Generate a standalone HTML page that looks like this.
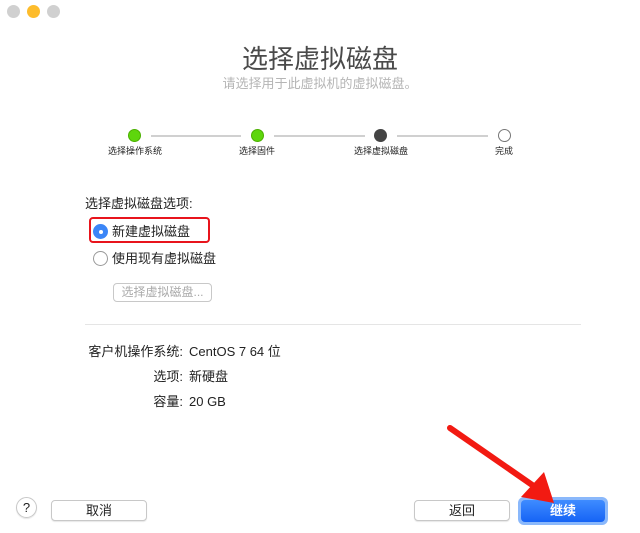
<!DOCTYPE html>
<html><head><meta charset="utf-8"><style>
*{margin:0;padding:0;box-sizing:border-box}
body{width:640px;height:533px;background:#fff;font-family:"Liberation Sans","Noto Sans CJK SC",sans-serif;position:relative;overflow:hidden;color:#222}
.a{position:absolute;white-space:nowrap;line-height:1.2}
.dot{position:absolute;width:13px;height:13px;border-radius:50%}
.line{position:absolute;height:2px;background:#d0d0d0;top:135px}
.lbl{position:absolute;font-size:9px;top:146px;transform:translateX(-50%);color:#222;line-height:1.2}
.btn{position:absolute;border:1px solid #c8c8c8;border-radius:4px;background:#fff;font-size:13px;text-align:center;line-height:19px;box-shadow:0 1px 1px rgba(0,0,0,.1)}
</style></head><body>
<div class="dot" style="left:7px;top:5px;background:#d0d0d0"></div>
<div class="dot" style="left:27px;top:5px;background:#fdbc2c"></div>
<div class="dot" style="left:47px;top:5px;background:#d0d0d0"></div>
<div class="a" style="left:0;width:640px;text-align:center;top:44px;font-size:26px;color:#4a4a4a">选择虚拟磁盘</div>
<div class="a" style="left:0;width:640px;text-align:center;top:76px;font-size:13px;color:#b5b5b5">请选择用于此虚拟机的虚拟磁盘。</div>
<div class="line" style="left:151px;width:90px"></div>
<div class="line" style="left:274px;width:91px"></div>
<div class="line" style="left:397px;width:91px"></div>
<div class="dot" style="left:128px;top:129px;background:#5ed60c;border:1px solid #4bb000"></div>
<div class="dot" style="left:251px;top:129px;background:#5ed60c;border:1px solid #4bb000"></div>
<div class="dot" style="left:374px;top:129px;background:#444"></div>
<div class="dot" style="left:498px;top:129px;background:#fff;border:1px solid #777"></div>
<div class="lbl" style="left:135px">选择操作系统</div>
<div class="lbl" style="left:257px">选择固件</div>
<div class="lbl" style="left:381px">选择虚拟磁盘</div>
<div class="lbl" style="left:504px">完成</div>
<div class="a" style="left:85px;top:196px;font-size:13px">选择虚拟磁盘选项:</div>
<div class="a" style="left:89px;top:217px;width:121px;height:26px;border:2px solid #e8141c;border-radius:4px"></div>
<div class="a" style="left:93px;top:224px;width:15px;height:15px;border-radius:50%;background:#3b86f7"></div>
<div class="a" style="left:98.5px;top:229.5px;width:4px;height:4px;border-radius:50%;background:#fff"></div>
<div class="a" style="left:112px;top:224px;font-size:13px">新建虚拟磁盘</div>
<div class="a" style="left:93px;top:251px;width:15px;height:15px;border-radius:50%;border:1px solid #999;background:#fff"></div>
<div class="a" style="left:112px;top:251px;font-size:13px">使用现有虚拟磁盘</div>
<div class="btn" style="left:113px;top:283px;width:99px;height:19px;color:#aaa;font-size:12px;line-height:17px;box-shadow:none">选择虚拟磁盘...</div>
<div class="a" style="left:85px;top:324px;width:496px;height:1px;background:#e5e5e5"></div>
<div class="a" style="left:85px;top:344px;width:98px;text-align:right;font-size:13px">客户机操作系统:</div>
<div class="a" style="left:189px;top:344px;font-size:13px">CentOS 7 64 位</div>
<div class="a" style="left:85px;top:369px;width:98px;text-align:right;font-size:13px">选项:</div>
<div class="a" style="left:189px;top:369px;font-size:13px">新硬盘</div>
<div class="a" style="left:85px;top:394px;width:98px;text-align:right;font-size:13px">容量:</div>
<div class="a" style="left:189px;top:394px;font-size:13px">20 GB</div>
<div class="a" style="left:16px;top:497px;width:21px;height:21px;border-radius:50%;border:1px solid #c8c8c8;text-align:center;font-size:13px;line-height:19px;box-shadow:0 1px 1px rgba(0,0,0,.1)">?</div>
<div class="btn" style="left:51px;top:500px;width:96px;height:21px">取消</div>
<div class="btn" style="left:414px;top:500px;width:96px;height:21px">返回</div>
<div class="a" style="left:518px;top:497px;width:90px;height:28px;border-radius:6px;background:#8ab8fb"></div>
<div class="a" style="left:521px;top:500px;width:84px;height:22px;border-radius:4px;background:linear-gradient(#3f8cff,#1563f5);color:#fff;font-size:13px;text-align:center;line-height:22px;font-weight:bold">继续</div>
<svg class="a" style="left:0;top:0" width="640" height="533">
<line x1="450" y1="428" x2="538" y2="489" stroke="#f21a12" stroke-width="6" stroke-linecap="round"/>
<polygon points="521,497 544,472 554,503" fill="#f21a12"/>
</svg>
</body></html>
